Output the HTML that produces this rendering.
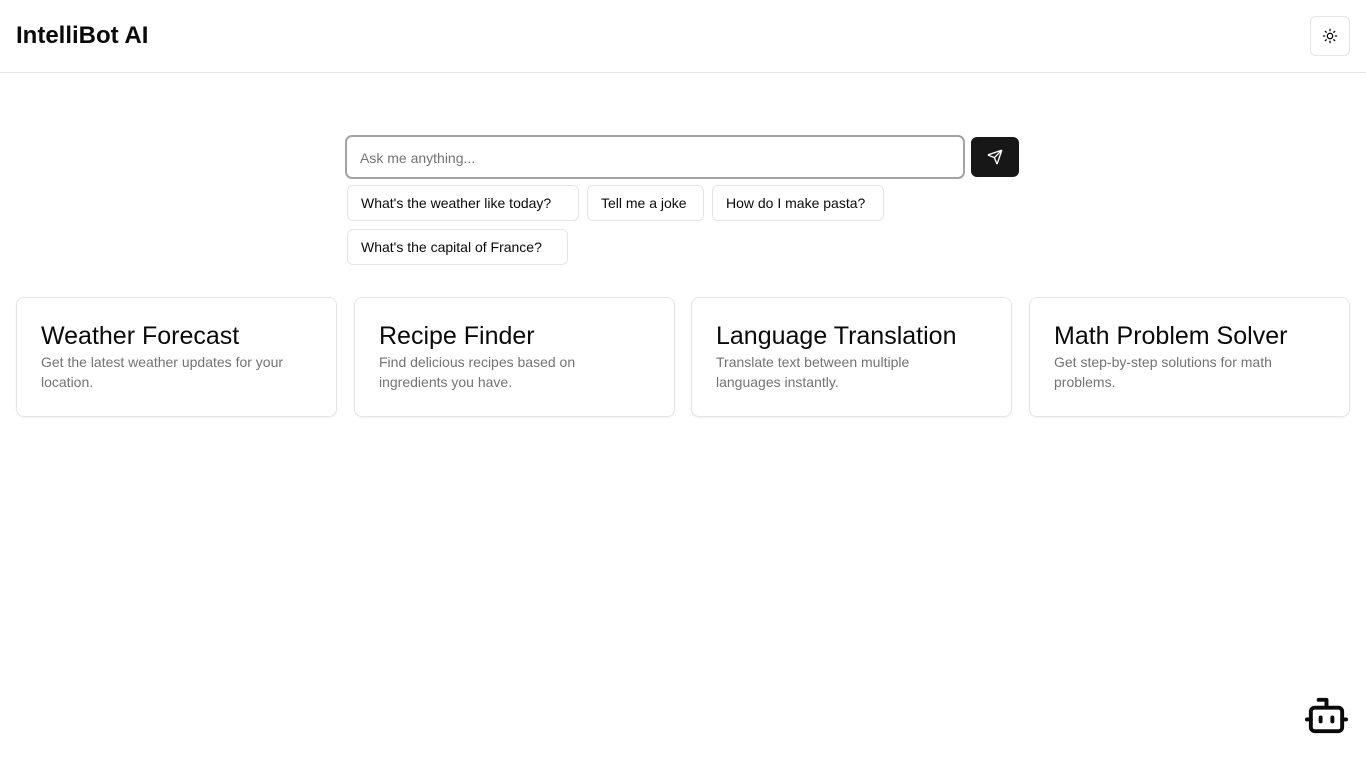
<!DOCTYPE html>
<html><head><meta charset="utf-8"><style>
*{box-sizing:border-box;margin:0;padding:0}
body{width:1366px;height:768px;background:#fff;font-family:"Liberation Sans",sans-serif;color:#0a0a0a;position:relative;overflow:hidden}
header{height:73px;border-bottom:1px solid #e5e5e5;position:relative}
h1{position:absolute;left:16px;top:22px;font-size:24px;font-weight:700}
.theme{position:absolute;left:1310px;top:16px;width:40px;height:40px;border:1px solid #e5e5e5;border-radius:6px;display:flex;align-items:center;justify-content:center}
.input{position:absolute;left:345px;top:135px;width:620px;height:44px;border:2px solid #a3a3a3;border-radius:7px;padding:0 0 0 13px;}
.input div{height:40px;border-radius:5px;line-height:42px;font-size:14px;color:#737373}
.send{position:absolute;left:971px;top:137px;width:48px;height:40px;background:#171717;border-radius:6px;display:flex;align-items:center;justify-content:center}
.chip{position:absolute;height:36px;border:1px solid #e5e5e5;border-radius:6px;font-size:14px;line-height:34px;padding-left:13px;white-space:nowrap}
.card{position:absolute;top:297px;width:321px;height:120px;border:1px solid #e5e5e5;border-radius:8px;padding:22px 24px;box-shadow:0 1px 2px rgba(0,0,0,.05)}
.card h2{font-size:25px;font-weight:500;line-height:30px;white-space:nowrap;margin-top:1px}
.card p{font-size:14px;color:#737373;line-height:20px;margin-top:1px;white-space:nowrap}
</style></head><body>
<header><h1>IntelliBot AI</h1>
<div class="theme"><svg width="16" height="16" viewBox="0 0 24 24" fill="none" stroke="#0a0a0a" stroke-width="2" stroke-linecap="round"><circle cx="12" cy="12" r="4"/><path d="M12 2v2M12 20v2M4.93 4.93l1.41 1.41M17.66 17.66l1.41 1.41M2 12h2M20 12h2M6.34 17.66l-1.41 1.41M19.07 4.93l-1.41 1.41"/></svg></div>
</header>
<div class="input"><div>Ask me anything...</div></div>
<div class="send"><svg width="16" height="16" viewBox="0 0 24 24" fill="none" stroke="#fff" stroke-width="2" stroke-linecap="round" stroke-linejoin="round"><path d="M14.536 21.686a.5.5 0 0 0 .937-.024l6.5-19a.496.496 0 0 0-.635-.635l-19 6.5a.5.5 0 0 0-.024.937l7.93 3.18a2 2 0 0 1 1.112 1.11z"/><path d="m21.854 2.147-10.94 10.939"/></svg></div>
<div class="chip" style="left:347px;top:185px;width:232px">What's the weather like today?</div>
<div class="chip" style="left:587px;top:185px;width:117px">Tell me a joke</div>
<div class="chip" style="left:712px;top:185px;width:172px">How do I make pasta?</div>
<div class="chip" style="left:347px;top:229px;width:221px">What's the capital of France?</div>
<div class="card" style="left:16px"><h2>Weather Forecast</h2><p>Get the latest weather updates for your<br>location.</p></div>
<div class="card" style="left:354px"><h2>Recipe Finder</h2><p>Find delicious recipes based on<br>ingredients you have.</p></div>
<div class="card" style="left:691px"><h2>Language Translation</h2><p>Translate text between multiple<br>languages instantly.</p></div>
<div class="card" style="left:1029px"><h2>Math Problem Solver</h2><p>Get step-by-step solutions for math<br>problems.</p></div>
<svg style="position:absolute;left:1303px;top:692px" width="47" height="47" viewBox="0 0 24 24" fill="none" stroke="#0a0a0a" stroke-width="2" stroke-linecap="round" stroke-linejoin="round"><path d="M12 8V4H8"/><rect width="16" height="12" x="4" y="8" rx="2"/><path d="M2 14h2M20 14h2M15 13v2M9 13v2"/></svg>
</body></html>
